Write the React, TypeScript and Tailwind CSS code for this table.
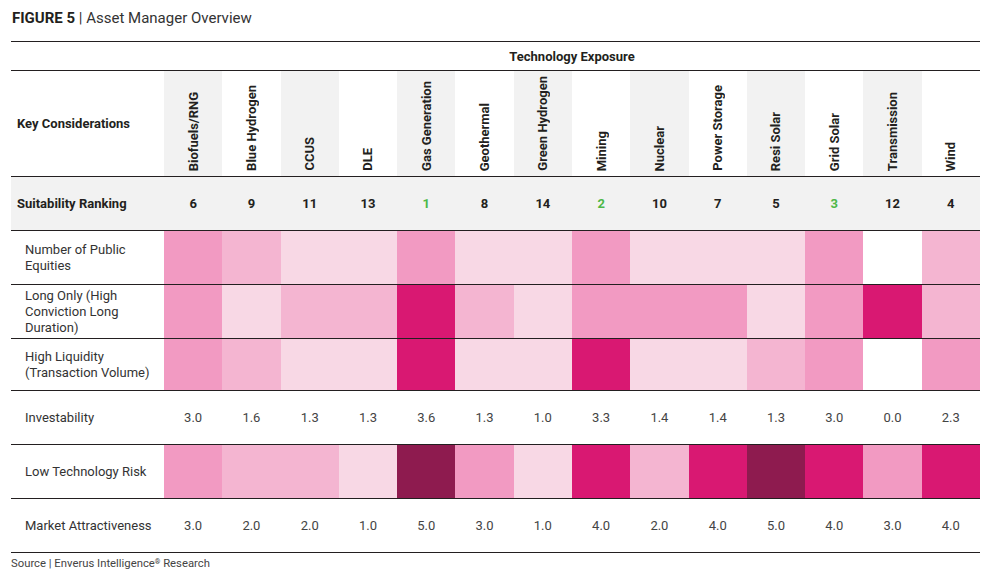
import React from 'react'

type Shade = 'W' | 'L' | 'ML' | 'M' | 'S' | 'D'

const shadeClass: Record<Shade, string> = {
  W: 'bg-white',
  L: 'bg-[#f8d8e5]',
  ML: 'bg-[#f4b5d1]',
  M: 'bg-[#f29ac2]',
  S: 'bg-[#d91872]',
  D: 'bg-[#8e1b4f]',
}

const techs = [
  'Biofuels/RNG',
  'Blue Hydrogen',
  'CCUS',
  'DLE',
  'Gas Generation',
  'Geothermal',
  'Green Hydrogen',
  'Mining',
  'Nuclear',
  'Power Storage',
  'Resi Solar',
  'Grid Solar',
  'Transmission',
  'Wind',
]

const ranking = [6, 9, 11, 13, 1, 8, 14, 2, 10, 7, 5, 3, 12, 4]

type Row =
  | { label: string[]; kind: 'heat'; cells: Shade[]; h: string }
  | { label: string[]; kind: 'value'; cells: string[]; h: string }

const rows: Row[] = [
  {
    label: ['Number of Public', 'Equities'],
    kind: 'heat',
    h: 'h-[54px]',
    cells: ['M', 'ML', 'L', 'L', 'M', 'L', 'L', 'M', 'L', 'L', 'L', 'M', 'W', 'ML'],
  },
  {
    label: ['Long Only (High', 'Conviction Long', 'Duration)'],
    kind: 'heat',
    h: 'h-[54px]',
    cells: ['M', 'L', 'ML', 'ML', 'S', 'ML', 'L', 'M', 'M', 'M', 'L', 'M', 'S', 'ML'],
  },
  {
    label: ['High Liquidity', '(Transaction Volume)'],
    kind: 'heat',
    h: 'h-[52px]',
    cells: ['M', 'ML', 'L', 'L', 'S', 'L', 'L', 'S', 'L', 'L', 'ML', 'M', 'W', 'M'],
  },
  {
    label: ['Investability'],
    kind: 'value',
    h: 'h-[54px]',
    cells: ['3.0', '1.6', '1.3', '1.3', '3.6', '1.3', '1.0', '3.3', '1.4', '1.4', '1.3', '3.0', '0.0', '2.3'],
  },
  {
    label: ['Low Technology Risk'],
    kind: 'heat',
    h: 'h-[54px]',
    cells: ['M', 'ML', 'ML', 'L', 'D', 'M', 'L', 'S', 'ML', 'S', 'D', 'S', 'M', 'S'],
  },
  {
    label: ['Market Attractiveness'],
    kind: 'value',
    h: 'h-[54px]',
    cells: ['3.0', '2.0', '2.0', '1.0', '5.0', '3.0', '1.0', '4.0', '2.0', '4.0', '5.0', '4.0', '3.0', '4.0'],
  },
]

const grid = 'grid grid-cols-[153px_repeat(14,1fr)]'

export default function App() {
  return (
    <div className="w-[996px] h-[587px] bg-white text-[#231f20] font-['Roboto','Liberation_Sans',sans-serif]">
      <div className="h-[41px] pl-[12px] pt-[9px] text-[15px] leading-[18px]">
        <span className="font-bold">FIGURE 5</span>
        <span className="text-[#333]"> | Asset Manager Overview</span>
      </div>

      <div className="ml-[11px] w-[969px]">
        {/* Technology Exposure */}
        <div className={`${grid} h-[29px] border-t border-[#231f20]`}>
          <div />
          <div className="col-span-14 flex items-center justify-center pt-[2px] text-[13px] font-bold">
            Technology Exposure
          </div>
        </div>

        {/* column headers */}
        <div className={`${grid} h-[106px] border-t border-[#231f20]`}>
          <div className="flex items-center pl-[6px] text-[13px] font-bold">Key Considerations</div>
          {techs.map((t, i) => (
            <div
              key={t}
              className={`flex items-end justify-center pb-[5px] ${i % 2 === 0 ? 'bg-[#f2f2f2]' : 'bg-white'}`}
            >
              <span className="[writing-mode:vertical-rl] rotate-180 text-[13px] font-bold leading-[15px] whitespace-nowrap">
                {t}
              </span>
            </div>
          ))}
        </div>

        {/* Suitability ranking */}
        <div className={`${grid} h-[54px] border-t border-[#231f20] bg-[#f2f2f2] text-[13px] font-bold`}>
          <div className="flex items-center pl-[6px]">Suitability Ranking</div>
          {ranking.map((r, i) => (
            <div key={i} className={`flex items-center justify-center ${r <= 3 ? 'text-[#4db848]' : ''}`}>
              {r}
            </div>
          ))}
        </div>

        {rows.map((row) => (
          <div key={row.label.join(' ')} className={`${grid} ${row.h} border-t border-[#231f20]`}>
            <div className="flex flex-col justify-center pl-[14px] text-[13px] leading-[16px] text-[#333]">
              {row.label.map((l) => (
                <span key={l}>{l}</span>
              ))}
            </div>
            {row.kind === 'heat'
              ? row.cells.map((c, i) => <div key={i} className={shadeClass[c]} />)
              : row.cells.map((v, i) => (
                  <div key={i} className="flex items-center justify-center text-[13px] text-[#444]">
                    {v}
                  </div>
                ))}
          </div>
        ))}

        <div className="border-t border-[#231f20] pt-[4px] text-[11.3px] leading-[14px] text-[#444]">
          Source | Enverus Intelligence<sup className="text-[7px] font-bold">®</sup> Research
        </div>
      </div>
    </div>
  )
}
